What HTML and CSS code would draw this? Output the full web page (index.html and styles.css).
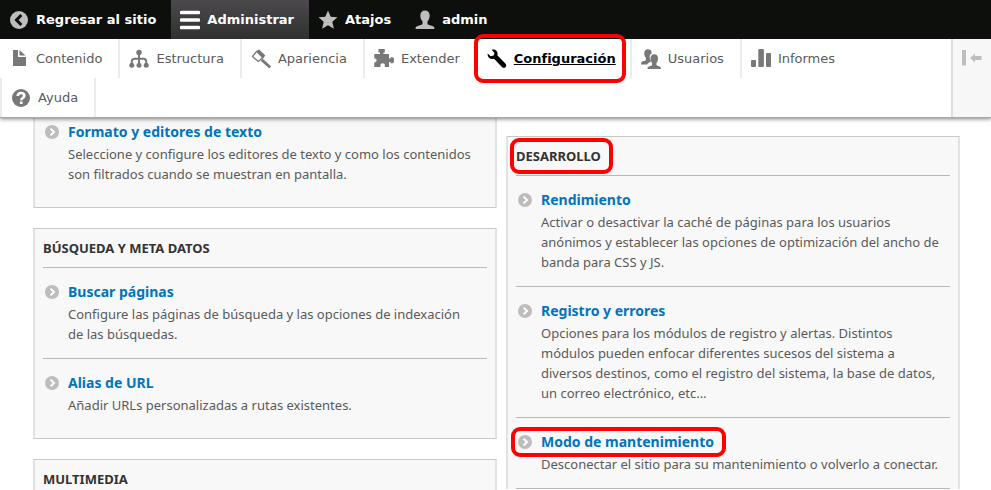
FILE: index.html
```html
<!DOCTYPE html>
<html lang="es">
<head>
<meta charset="utf-8">
<meta name="viewport" content="width=device-width, initial-scale=1">
<title>Configuración</title>
<link rel="stylesheet" href="styles.css">
</head>
<body>
<svg class="sprite" aria-hidden="true">
  <symbol id="chevron" viewBox="0 0 14 14"><circle cx="7" cy="7" r="7" fill="#bdbdbd"/><path d="M5.600 3.600 9 7l-3.400 3.400" fill="none" stroke="#fff" stroke-width="2"/></symbol>
</svg>
<header class="toolbar">
  <nav class="bar" aria-label="Barra de administración">
    <a class="bar-item" href="#"><svg class="icon" viewBox="0 0 20 20"><circle cx="10" cy="10" r="9" fill="#bebebe"/><path d="M12.300 5 7.500 10l4.800 5" fill="none" stroke="#0f0f0f" stroke-width="3"/></svg>Regresar al sitio</a>
    <a class="bar-item bar-active" href="#"><svg class="icon" viewBox="0 0 20 20"><path d="M1.500 2.500h17M1.500 10h17M1.500 17.500h17" stroke="#fff" stroke-width="3.600" stroke-linecap="round"/></svg>Administrar</a>
    <a class="bar-item" href="#"><svg class="icon" viewBox="0 0 20 20"><path d="m10 .4 2.700 6.300 6.800.6-5.200 4.500 1.600 6.900L10 15.200 4.100 18.700l1.600-6.900L.5 7.300l6.800-.6z" fill="#bebebe"/></svg>Atajos</a>
    <a class="bar-item" href="#"><svg class="icon" viewBox="0 0 20 20"><path d="M10 .5c3 0 4.700 2 4.700 5 0 2.500-1 4.600-2.200 5.900v2.200c0 1 1 1.500 3.300 2 2.400.5 3.700 1.200 3.700 3.400H.5c0-2.200 1.300-2.900 3.700-3.400 2.300-.5 3.300-1 3.300-2v-2.200C6.300 10.100 5.300 8 5.300 5.500c0-3 1.700-5 4.700-5z" fill="#bebebe"/></svg>admin</a>
  </nav>
  <div class="tray">
    <nav class="tabs" aria-label="Menú de administración">
      <a class="tab" href="#"><svg class="icon" viewBox="0 0 20 20"><path d="M4 1h5v7h8v9H4z M10.500 1 16.500 6.500h-6z" fill="#787878"/></svg>Contenido</a>
      <a class="tab" href="#"><svg class="icon" viewBox="0 0 20 20"><circle cx="10" cy="3.500" r="2.700" fill="#787878"/><path d="M10 4v12M2.700 16v-3c0-2 1-3.300 3-3.300h8.600c2 0 3 1.300 3 3.300v3" fill="none" stroke="#787878" stroke-width="2"/><circle cx="2.800" cy="16.300" r="2.500" fill="#787878"/><circle cx="10" cy="16.300" r="2.500" fill="#787878"/><circle cx="17.200" cy="16.300" r="2.500" fill="#787878"/></svg>Estructura</a>
      <a class="tab" href="#"><svg class="icon" viewBox="0 0 20 20"><path d="M6 2 1.500 7.500l5.800 5 5.500-4.800" fill="none" stroke="#787878" stroke-width="1.300"/><path d="m5 2.500 3-2.300 6.300 6.300-2.500 3.300z" fill="#787878"/><path d="m11.500 11.500 6.700 6" stroke="#787878" stroke-width="3" stroke-linecap="round"/></svg>Apariencia</a>
      <a class="tab" href="#"><svg class="icon" viewBox="0 0 20 20"><path d="M.3 5H6V3.400H4.500V0h6.300v3.400H9.500V5H15v4.500h1.500V8.200h2c1.200 0 1.500.8 1.500 3s-.3 3-1.500 3h-2v-1.300H15V18h-4.200v-1.500c.8-3-5-3-4.300 0V18H.3v-4.700c3 .8 3-4.600 0-3.800z" fill="#787878"/></svg>Extender</a>
      <a class="tab tab-active" href="#"><svg class="icon" viewBox="0 0 20 20"><path d="M4.700.7C8.500-.5 11.600 2.500 10.300 6.300l8.300 8.500c1.700 2.500-1 5-3.400 3.400L7 9.800C3.500 11 0 8.500.7 4.600l3 2.700 3-.8.800-2.600z" fill="#000"/></svg><span class="tab-label">Configuración</span><span class="ring ring-tab"></span></a>
      <a class="tab" href="#"><svg class="icon" viewBox="0 0 20 20"><path d="M6.800.2c2.500 0 4 1.500 3.900 4-1.800 1-2.400 3-1.900 5.200.2 1.200.7 2 1.300 2.700-.6 1.300-2.700 1.600-4.100 3.400H0c0-2.500 1-3 2.800-3.400 1.500-.3 2-.7 2-1.700V8.700c-2.400-3-2.200-8.500 2-8.500z" fill="#787878"/><path d="M13.300 5.200c2.500 0 3.800 1.700 3.700 4.200 0 2-.7 3.500-1.600 4.500v1.500c0 .9.700 1.200 2 1.500 1.700.4 2.600 1.200 2.600 3H6.500c0-1.800.9-2.600 2.600-3 1.400-.3 2-.6 2-1.500v-1.500c-.9-1-1.600-2.500-1.600-4.500 0-2.500 1.300-4.200 3.800-4.200z" fill="#787878"/></svg>Usuarios</a>
      <a class="tab tab-last" href="#"><svg class="icon" viewBox="0 0 20 20"><rect x="0" y="11" width="5" height="7" rx="1" fill="#787878"/><rect x="7.300" y="0" width="5.600" height="18" rx="1" fill="#787878"/><rect x="15" y="4" width="5" height="14" rx="1" fill="#787878"/></svg>Informes</a>
      <a class="tab tab-row-start" href="#"><svg class="icon" viewBox="0 0 20 20"><circle cx="10" cy="10" r="9" fill="#787878"/><path d="M6.800 8c0-4 6.500-4 6.500-.3 0 2.300-3 2.300-3 4.500" fill="none" stroke="#fff" stroke-width="2.600"/><rect x="8.900" y="13.500" width="2.700" height="2.500" fill="#fff"/></svg>Ayuda</a>
    </nav>
    <button class="toggle" type="button" aria-label="Orientación vertical"><svg class="icon" viewBox="0 0 20 20"><path d="M0 2h4v15.500H0zM8 10l5-4.500V8h6.500v4H13v2.500z" fill="#bebebe"/></svg></button>
  </div>
</header>
<main class="columns">
  <div class="column">
    <section class="panel panel-continued">
      <ul class="list">
        <li class="row"><svg class="bullet"><use href="#chevron"/></svg><div><a class="title" href="#">Formato y editores de texto</a><p class="text">Seleccione y configure los editores de texto y como los contenidos son filtrados cuando se muestran en pantalla.</p></div></li>
      </ul>
    </section>
    <section class="panel">
      <h2 class="heading">BÚSQUEDA Y META DATOS</h2>
      <ul class="list">
        <li class="row"><svg class="bullet"><use href="#chevron"/></svg><div><a class="title" href="#">Buscar páginas</a><p class="text">Configure las páginas de búsqueda y las opciones de indexación de las búsquedas.</p></div></li>
        <li class="row"><svg class="bullet"><use href="#chevron"/></svg><div><a class="title" href="#">Alias de URL</a><p class="text">Añadir URLs personalizadas a rutas existentes.</p></div></li>
      </ul>
    </section>
    <section class="panel">
      <h2 class="heading">MULTIMEDIA</h2>
    </section>
  </div>
  <div class="column column-second">
    <section class="panel panel-open">
      <h2 class="heading"><span class="marked">DESARROLLO<span class="ring ring-heading"></span></span></h2>
      <ul class="list">
        <li class="row"><svg class="bullet"><use href="#chevron"/></svg><div><a class="title" href="#">Rendimiento</a><p class="text">Activar o desactivar la caché de páginas para los usuarios anónimos y establecer las opciones de optimización del ancho de banda para CSS y JS.</p></div></li>
        <li class="row"><svg class="bullet"><use href="#chevron"/></svg><div><a class="title" href="#">Registro y errores</a><p class="text">Opciones para los módulos de registro y alertas. Distintos módulos pueden enfocar diferentes sucesos del sistema a diversos destinos, como el registro del sistema, la base de datos, un correo electrónico, etc...</p></div></li>
        <li class="row"><svg class="bullet"><use href="#chevron"/></svg><div><a class="title marked" href="#">Modo de mantenimiento<span class="ring ring-title"></span></a><p class="text">Desconectar el sitio para su mantenimiento o volverlo a conectar.</p></div></li>
      </ul>
    </section>
  </div>
</main>
</body>
</html>
```
FILE: styles.css
```css
* { box-sizing: border-box; }
body {
  margin: 0;
  background: #fff;
  color: #5a5a5a;
  font-family: "Noto Sans", sans-serif;
}
a { color: inherit; text-decoration: none; }
.sprite { position: absolute; width: 0; height: 0; }
.icon { flex: none; width: 20px; height: 20px; }

.toolbar {
  position: relative;
  z-index: 2;
  font-family: "DejaVu Sans", sans-serif;
  font-size: 13px;
  box-shadow: 0 1px 4px rgba(0, 0, 0, 0.5);
}
.bar { display: flex; height: 39px; background: #0d0f0c; }
.bar-item {
  display: flex;
  align-items: center;
  gap: 7px;
  padding: 0 15px 0 9px;
  color: #fff;
  font-weight: bold;
}
.bar-active { background: linear-gradient(#4b494c, #303030); }

.tray { display: flex; background: #fff; border-bottom: 1px solid #a8a8a8; }
.tabs { display: flex; flex: 1; flex-wrap: wrap; }
.tab {
  position: relative;
  display: flex;
  align-items: center;
  gap: 7px;
  height: 39px;
  padding: 0 16px 0 9px;
  border-right: 2px solid #ececec;
}
.tab-active { padding-right: 14px; color: #000; font-weight: bold; }
.tab-label { text-decoration: underline; }
.tab-last { margin-right: 80px; border-right: 0; }
.tab-row-start { border-left: 2px solid #ececec; }
.toggle {
  width: 40px;
  padding: 9px 0 0 9px;
  border: 0;
  border-left: 2px solid #dedede;
  background: #f7f7f7;
  text-align: left;
  display: flex;
}

.columns {
  display: grid;
  grid-template-columns: 464fr 454fr;
  gap: 9px;
  padding: 0 31px 0 33px;
}
.column { display: flex; flex-direction: column; gap: 20px; }
.column-second { padding-top: 18px; }
.panel {
  padding: 0 8px;
  border: 1px solid #c8c8c8;
  border-width: 1px 2px;
  border-left-color: #e2e2e2;
  border-right-color: #e2e2e2;
  background: #f8f8f8;
}
.panel-continued { border-top: 0; }
.panel-open { border-bottom: 0; }
.heading {
  margin: 0;
  color: #333;
  font-size: 13px;
  font-weight: bold;
  line-height: 38px;
}
.list { margin: 0; padding: 0 0 9px; list-style: none; }
.panel-open .list { padding: 0; border-bottom: 1px solid #b8b8b8; }
.column:first-child .panel:last-child { border-bottom: 0; margin-bottom: -8px; }
.row {
  display: flex;
  gap: 9px;
  padding: 13px 8px 14px 2px;
  border-top: 1px solid #b8b8b8;
}
.column:first-child .row { padding-right: 12px; }
.panel-continued .row { padding-top: 3px; border-top: 0; }
.bullet { flex: none; width: 14px; height: 14px; margin-top: 4px; }
.title {
  display: inline-block;
  color: #0074bd;
  font-size: 14px;
  font-weight: bold;
  line-height: 22px;
  vertical-align: top;
}
.text { margin: 1px 0 0; font-size: 13px; line-height: 20px; }

.marked { position: relative; }
.ring {
  position: absolute;
  border: 4px solid #f00;
  border-radius: 9px;
  pointer-events: none;
}
.ring-tab { inset: -5px 4px -5px -4px; }
.ring-heading { inset: -9px -12px -9px -6px; }
.ring-title { inset: -4px -12px -4px -30px; }
```
